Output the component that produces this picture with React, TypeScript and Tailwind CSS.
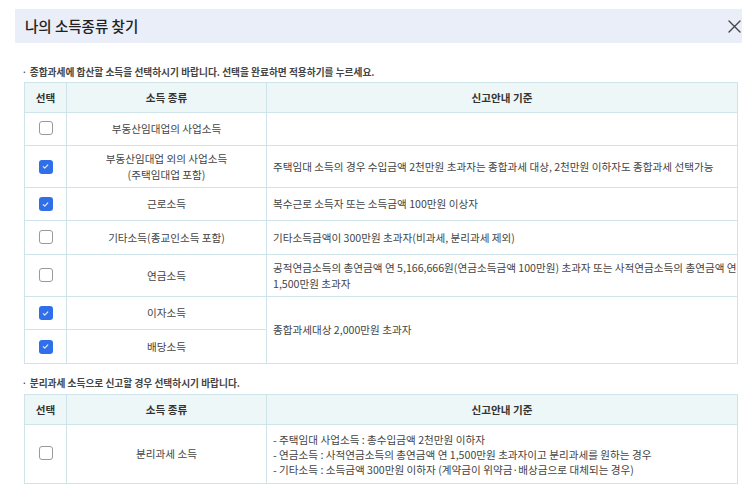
type Row = {
  checked: boolean
  name: string[]
  desc?: string[]
  h: string
  rowSpan?: number
  skipDesc?: boolean
}

const rows: Row[] = [
  { checked: false, name: ['부동산임대업의 사업소득'], desc: [], h: 'h-[33px]' },
  {
    checked: true,
    name: ['부동산임대업 외의 사업소득', '(주택임대업 포함)'],
    desc: ['주택임대 소득의 경우 수입금액 2천만원 초과자는 종합과세 대상, 2천만원 이하자도 종합과세 선택가능'],
    h: 'h-[42px]',
  },
  { checked: true, name: ['근로소득'], desc: ['복수근로 소득자 또는 소득금액 100만원 이상자'], h: 'h-[33px]' },
  { checked: false, name: ['기타소득(종교인소득 포함)'], desc: ['기타소득금액이 300만원 초과자(비과세, 분리과세 제외)'], h: 'h-[34px]' },
  {
    checked: false,
    name: ['연금소득'],
    desc: ['공적연금소득의 총연금액 연 5,166,666원(연금소득금액 100만원) 초과자 또는 사적연금소득의 총연금액 연', '1,500만원 초과자'],
    h: 'h-[42px]',
  },
  { checked: true, name: ['이자소득'], desc: ['종합과세대상 2,000만원 초과자'], h: 'h-[33px]', rowSpan: 2 },
  { checked: true, name: ['배당소득'], h: 'h-[34px]', skipDesc: true },
]

function Check({ checked }: { checked: boolean }) {
  if (checked) {
    return (
      <span className="inline-flex h-[14px] w-[14px] items-center justify-center rounded-[3px] bg-[#2f6fea]">
        <svg viewBox="0 0 12 12" className="h-[9px] w-[9px]" fill="none" stroke="#dbe6ff" strokeWidth="1.6" strokeLinecap="round" strokeLinejoin="round">
          <path d="M3 6.2 5 8.2 9 4" />
        </svg>
      </span>
    )
  }
  return <span className="inline-block h-[14px] w-[14px] rounded-[3px] border border-[#9a9a9a] bg-white" />
}

const th = 'border border-[#cfe4ea] bg-[#eef7f7] font-bold text-[#333] text-[10.6px] text-center'
const td = 'border border-[#cfe4ea] text-[10.6px] text-[#444] break-keep'

function Head() {
  return (
    <thead>
      <tr className="h-[30px]">
        <th className={th}>선택</th>
        <th className={th}>소득 종류</th>
        <th className={th}>신고안내 기준</th>
      </tr>
    </thead>
  )
}

export default function App() {
  return (
    <div className="h-[498px] w-[749px] bg-white pt-[9px] font-['Noto_Sans_CJK_KR','Noto_Sans',sans-serif]">
      {/* 제목 */}
      <div className="ml-[15px] flex h-[34px] w-[727px] items-center justify-between bg-[#e9eef8] pl-[10px] pr-[1px]">
        <h1 className="text-[14.5px] font-medium text-[#222]">나의 소득종류 찾기</h1>
        <svg viewBox="0 0 13 13" className="h-[13px] w-[13px]" fill="none" stroke="#444" strokeWidth="1.4" strokeLinecap="round">
          <path d="M1 1 12 12M12 1 1 12" />
        </svg>
      </div>

      <p className="ml-[22px] mt-[21px] h-[16px] text-[9.7px] font-bold leading-[16px] text-[#444]">
        <span className="mr-[3px] align-top text-[8px]">·</span>
        종합과세에 합산할 소득을 선택하시기 바랍니다. 선택을 완료하면 적용하기를 누르세요.
      </p>

      <table className="ml-[24px] mt-[2px] w-[713px] table-fixed border-collapse">
        <colgroup>
          <col className="w-[42px]" />
          <col className="w-[200px]" />
          <col className="w-[471px]" />
        </colgroup>
        <Head />
        <tbody>
          {rows.map((r, i) => (
            <tr key={i} className={r.h}>
              <td className={`${td} text-center align-middle leading-none`}>
                <Check checked={r.checked} />
              </td>
              <td className={`${td} text-center leading-[16px]`}>
                {r.name.map((n) => (
                  <div key={n}>{n}</div>
                ))}
              </td>
              {!r.skipDesc && (
                <td rowSpan={r.rowSpan} className={`${td} pl-[6px] pr-[4px] leading-[16px]`}>
                  {r.desc?.map((d) => (
                    <div key={d} className="whitespace-nowrap">{d}</div>
                  ))}
                </td>
              )}
            </tr>
          ))}
        </tbody>
      </table>

      <p className="ml-[22px] mt-[11px] h-[16px] text-[9.7px] font-bold leading-[16px] text-[#444]">
        <span className="mr-[3px] align-top text-[8px]">·</span>
        분리과세 소득으로 신고할 경우 선택하시기 바랍니다.
      </p>

      <table className="ml-[24px] mt-[3px] w-[713px] table-fixed border-collapse">
        <colgroup>
          <col className="w-[42px]" />
          <col className="w-[200px]" />
          <col className="w-[471px]" />
        </colgroup>
        <Head />
        <tbody>
          <tr className="h-[59px]">
            <td className={`${td} text-center align-middle leading-none`}>
              <Check checked={false} />
            </td>
            <td className={`${td} text-center`}>분리과세 소득</td>
            <td className={`${td} pl-[6px] pr-[6px] leading-[15px]`}>
              <div>- 주택임대 사업소득 : 총수입금액 2천만원 이하자</div>
              <div>- 연금소득 : 사적연금소득의 총연금액 연 1,500만원 초과자이고 분리과세를 원하는 경우</div>
              <div>- 기타소득 : 소득금액 300만원 이하자 (계약금이 위약금·배상금으로 대체되는 경우)</div>
            </td>
          </tr>
        </tbody>
      </table>
    </div>
  )
}
